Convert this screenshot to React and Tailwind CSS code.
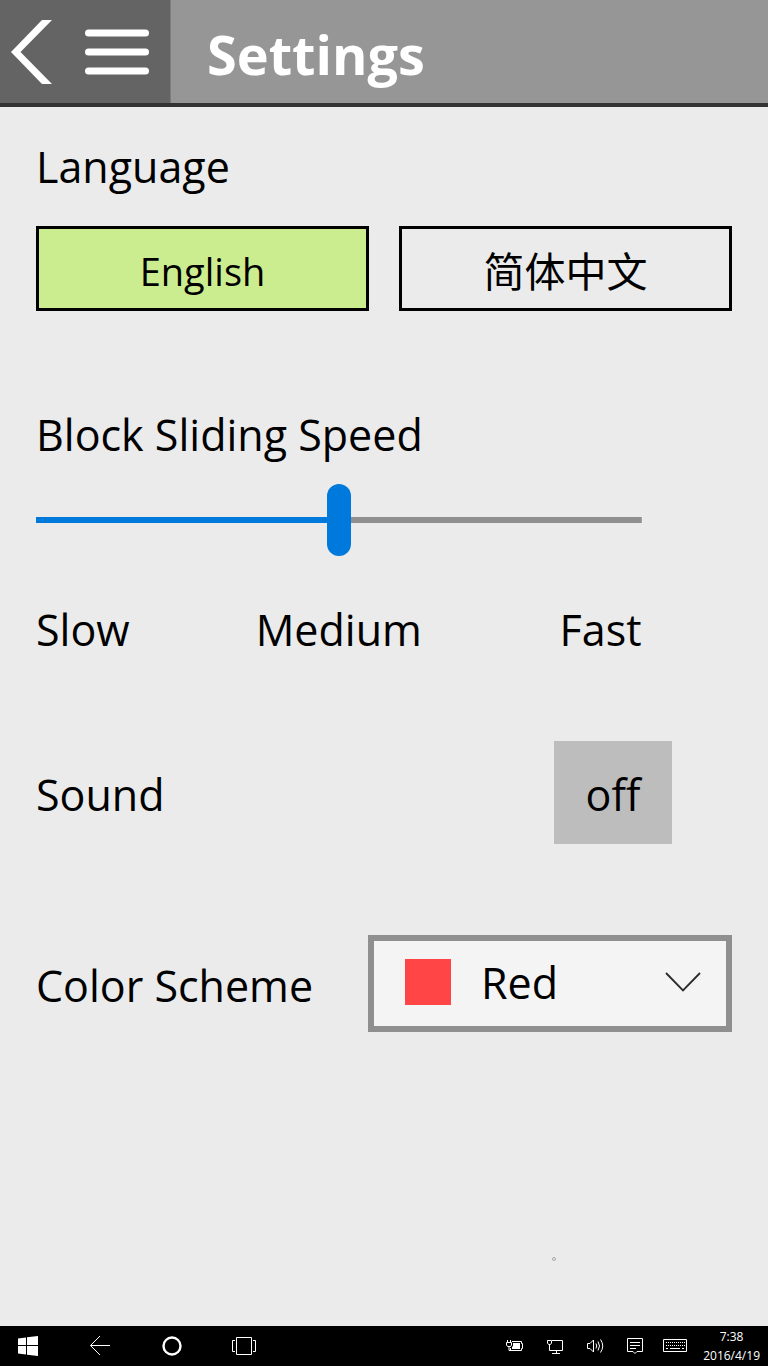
import { useState } from "react";

const SCHEMES = [
    { name: "Red", color: "#ff4545" },
    { name: "Green", color: "#4caf50" },
    { name: "Blue", color: "#0079dc" },
];

const LANGUAGES = [
    { code: "en", label: "English", size: "text-[38px]" },
    { code: "zh", label: "简体中文", size: "text-[41px]" },
];

function TitleBar() {
    return (
        <header className="flex h-[107px] border-b-4 border-[#333333] bg-[#969696] text-white">
            <button type="button" aria-label="Back" className="flex w-[63px] items-center justify-center bg-[#646464]">
                <svg className="h-16 w-[41px]" viewBox="0 0 41 64" fill="currentColor">
                    <path d="M31 0H41L9.500 32L41 64H31L0 32Z" />
                </svg>
            </button>
            <button type="button" aria-label="Menu" className="flex w-[108px] items-center justify-center border-r border-[#7c7c7c] bg-[#646464]">
                <svg className="h-[46px] w-16" viewBox="0 0 64 46" fill="currentColor">
                    <rect y="0.500" width="64" height="7" rx="3.500" />
                    <rect y="19.500" width="64" height="7" rx="3.500" />
                    <rect y="38.500" width="64" height="7" rx="3.500" />
                </svg>
            </button>
            <h1 className="self-center pt-1 pl-9 text-[54px] leading-[76px] font-bold">Settings</h1>
        </header>
    );
}

function LanguagePicker() {
    const [language, setLanguage] = useState("en");

    return (
        <section>
            <h2 id="language">Language</h2>
            <div role="group" aria-labelledby="language" className="mt-[29px] grid grid-cols-2 gap-[30px]">
                {LANGUAGES.map(({ code, label, size }) => (
                    <button
                        key={code}
                        type="button"
                        lang={code}
                        aria-pressed={language === code}
                        onClick={() => setLanguage(code)}
                        className={[
                            "flex h-[85px] items-center justify-center border-3 border-black pt-1",
                            size,
                            language === code ? "bg-[#cbed90]" : "",
                        ].join(" ")}
                    >
                        {label}
                    </button>
                ))}
            </div>
        </section>
    );
}

function SpeedSlider() {
    const [speed, setSpeed] = useState(50);

    return (
        <section className="mt-[94px]">
            <label htmlFor="speed" className="block">Block Sliding Speed</label>
            <div className="w-[87%]">
                <input
                    id="speed"
                    type="range"
                    min="0"
                    max="100"
                    step="50"
                    value={speed}
                    onChange={(e) => setSpeed(Number(e.target.value))}
                    className="mt-[19px] block h-[72px] w-full appearance-none bg-[length:100%_6px] bg-center bg-no-repeat [&::-webkit-slider-thumb]:h-[72px] [&::-webkit-slider-thumb]:w-6 [&::-webkit-slider-thumb]:appearance-none [&::-webkit-slider-thumb]:rounded-full [&::-webkit-slider-thumb]:bg-[#0079dc]"
                    style={{ backgroundImage: `linear-gradient(to right, #0079dc ${speed}%, #8f8f8f ${speed}%)` }}
                />
                <div className="mt-11 grid grid-cols-3">
                    <span>Slow</span>
                    <span className="text-center">Medium</span>
                    <span className="text-right">Fast</span>
                </div>
            </div>
        </section>
    );
}

function SoundRow() {
    const [on, setOn] = useState(false);

    return (
        <section className="mt-[81px] flex items-center justify-between pr-[60px]">
            <span id="sound" className="pt-1">Sound</span>
            <button
                type="button"
                aria-labelledby="sound"
                aria-pressed={on}
                onClick={() => setOn(!on)}
                className="h-[103px] w-[118px] bg-[#bdbdbd] pt-1"
            >
                {on ? "on" : "off"}
            </button>
        </section>
    );
}

function ColorSchemeRow() {
    const [scheme, setScheme] = useState("Red");
    const { color } = SCHEMES.find((item) => item.name === scheme);

    return (
        <section className="mt-[91px] flex items-center justify-between">
            <label htmlFor="scheme" className="pt-1">Color Scheme</label>
            <div className="relative w-[364px]">
                <select
                    id="scheme"
                    value={scheme}
                    onChange={(e) => setScheme(e.target.value)}
                    className="block h-[97px] w-full appearance-none border-6 border-[#8f8f8f] bg-[#f4f4f4] pb-0.5 pl-[107px]"
                >
                    {SCHEMES.map(({ name }) => <option key={name}>{name}</option>)}
                </select>
                <span className="pointer-events-none absolute top-6 left-[37px] h-[46px] w-[46px]" style={{ backgroundColor: color }} />
                <svg className="pointer-events-none absolute top-[37px] right-[31px] h-5 w-9" viewBox="0 0 36 20" fill="none" stroke="#2b2b2b" strokeWidth="1.800">
                    <path d="M1 1L18 18.500L35 1" />
                </svg>
            </div>
        </section>
    );
}

function BarIcon({ children }) {
    return (
        <svg className="h-6 w-6" viewBox="0 0 24 24" fill="none" stroke="currentColor" strokeWidth="1">
            {children}
        </svg>
    );
}

const NAV = [
    ["Start", (
        <g fill="currentColor" stroke="none">
            <path d="M2 4.500L10 3.500V11H2Z" />
            <path d="M11 3.300L22 2V11H11Z" />
            <path d="M2 12H10V20.500L2 19.500Z" />
            <path d="M11 12H22V22L11 20.700Z" />
        </g>
    )],
    ["Go back", <path d="M22 11.500H2.500M12 2L2.500 11.500L12 21" />],
    ["Search", <circle cx="12" cy="12" r="8.500" strokeWidth="2.400" />],
    ["Task view", <path d="M4.500 3.500H19.500V20.500H4.500ZM3 6.500H0.500V17.500H3M21 6.500H23.500V17.500H21" />],
];

const TRAY = [
    ["Battery", (
        <>
            <path d="M9 7.500H18.500V9.500H19.500V14.500H18.500V16.500H7.500V14M4.500 6V8M7.500 6V8M3.500 8.500H8.500V11L7.500 12.500H4.500L3.500 11ZM6 12.500V16.500H8" />
            <path d="M10 9H17V15H9V13L10 12Z" fill="currentColor" stroke="none" />
        </>
    )],
    ["Network", (
        <>
            <path d="M9 6.500H19.500V16.500H6.500V12M13.500 16.500V19M9 19.500H17" />
            <path d="M4.500 6.500H8.500V9L7.500 10.500H5.500L4.500 9ZM6.500 10.500V14" />
        </>
    )],
    ["Volume", (
        <>
            <path d="M4.500 9.500H7L10.500 6V18L7 14.500H4.500Z" />
            <path d="M13 9.500Q14.500 12 13 14.500M15 7.500Q18 12 15 16.500M17.500 5.500Q22 12 17.500 18.500" />
        </>
    )],
    ["Notifications", <path d="M4.500 4.500H19.500V17.500H14L12 19.500L10 17.500H4.500ZM7 8.500H17M7 11.500H17M7 14.500H13" />],
    ["Keyboard", (
        <>
            <path d="M0.500 5.500H23.500V17.500H0.500Z" />
            <path d="M3 8.500H22M3 11.500H22" strokeDasharray="1 1" />
            <path d="M3 14.500H5M7 14.500H17M19 14.500H21" />
        </>
    )],
];

function TaskBar() {
    return (
        <footer className="flex h-10 items-center bg-black pr-2 pl-4 text-white">
            <nav className="flex gap-12">
                {NAV.map(([label, icon]) => (
                    <button key={label} type="button" aria-label={label}><BarIcon>{icon}</BarIcon></button>
                ))}
            </nav>
            <div className="ml-auto flex gap-4">
                {TRAY.map(([label, icon]) => (
                    <button key={label} type="button" aria-label={label}><BarIcon>{icon}</BarIcon></button>
                ))}
            </div>
            <div className="ml-4 text-center text-xs leading-[19px]">
                <p>7:38</p>
                <p>2016/4/19</p>
            </div>
        </footer>
    );
}

export default function App() {
    return (
        <div className="flex min-h-screen flex-col bg-[#ebebeb] font-['Open_Sans','Noto_Sans_CJK_SC',sans-serif] text-black">
            <TitleBar />
            <main className="relative flex-1 px-9 pt-[30px] text-[43px] leading-[60px]">
                <LanguagePicker />
                <SpeedSlider />
                <SoundRow />
                <ColorSchemeRow />
                {/* touch pointer */}
                <span className="absolute right-[212px] bottom-[65px] h-1 w-1 rounded-full border border-[#a8a8a8]" />
            </main>
            <TaskBar />
        </div>
    );
}
